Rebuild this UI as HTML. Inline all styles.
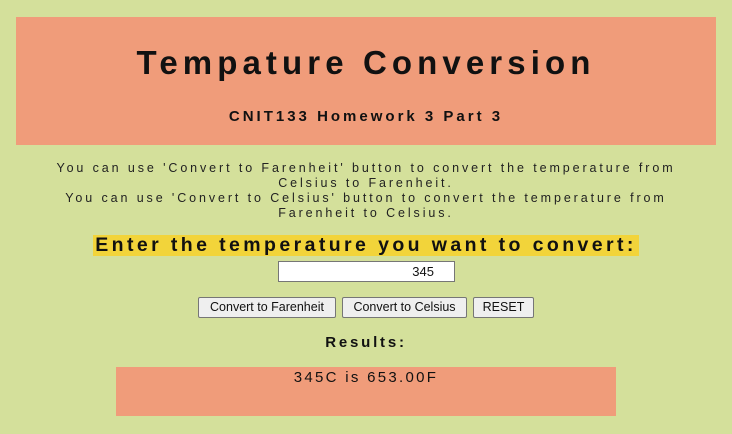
<!DOCTYPE html>
<html><head><style>
body{margin:0;width:732px;height:434px;background:#d4e09b;font-family:"Liberation Sans",sans-serif;position:relative;overflow:hidden;color:#111}
.a{position:absolute;left:0;width:732px;text-align:center;white-space:nowrap}
#hdr{position:absolute;left:16px;top:17px;width:700px;height:128px;background:#f09c7a}
#t{top:44px;font-size:33px;font-weight:bold;letter-spacing:5.1px}
#s{top:108px;font-size:15px;font-weight:bold;letter-spacing:3px}
.p{font-size:12.5px;letter-spacing:2.9px;line-height:15px;color:#222}
#h{top:235px}
#h span{background:#f2d43a;font-size:19.5px;font-weight:bold;letter-spacing:3.4px;padding:0 2px;line-height:21px;display:inline-block}
#in{position:absolute;left:278px;top:261px;background:#fff;border:1px solid #767676;box-sizing:border-box;width:177px;height:21px;font-size:13px;text-align:right;padding:2px 20px 0 0}
.b{position:absolute;top:297px;height:21px;background:#efefef;border:1px solid #767676;border-radius:2px;box-sizing:border-box;font-size:12.5px;line-height:19px;text-align:center}
#r{top:334px;font-size:15px;font-weight:bold;letter-spacing:2.8px}
#box{position:absolute;left:116px;top:367px;width:500px;height:49px;background:#f09c7a}
#rt{top:369px;font-size:15px;letter-spacing:2.3px}
</style></head><body>
<div id="hdr"></div>
<div class="a" id="t">Tempature Conversion</div>
<div class="a" id="s">CNIT133 Homework 3 Part 3</div>
<div class="a p" style="top:161px">You can use 'Convert to Farenheit' button to convert the temperature from<br>Celsius to Farenheit.<br>You can use 'Convert to Celsius' button to convert the temperature from<br>Farenheit to Celsius.</div>
<div class="a" id="h"><span>Enter the temperature you want to convert:</span></div>
<div id="in">345</div>
<div class="b" style="left:198px;width:138px">Convert to Farenheit</div>
<div class="b" style="left:342px;width:125px">Convert to Celsius</div>
<div class="b" style="left:473px;width:61px">RESET</div>
<div class="a" id="r">Results:</div>
<div id="box"></div>
<div class="a" id="rt">345C is 653.00F</div>
</body></html>
